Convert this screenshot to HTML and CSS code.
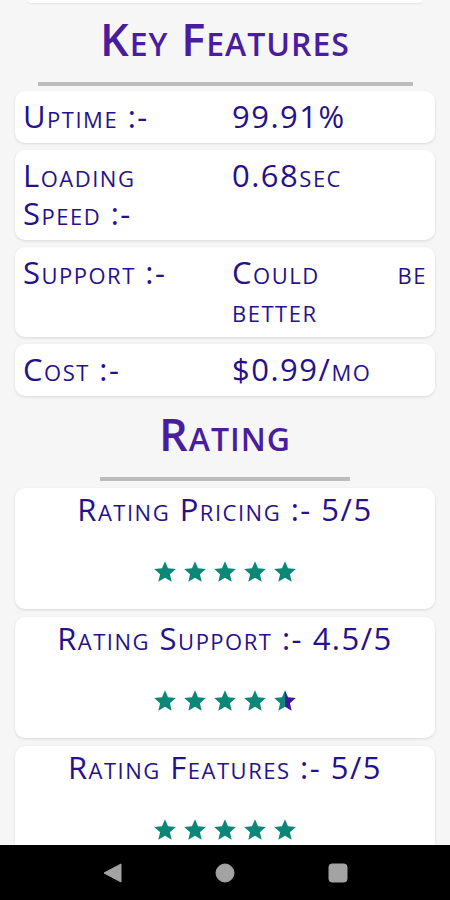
FILE: index.html
```html
<!DOCTYPE html>
<html lang="en">
<head>
    <meta charset="UTF-8">
    <title>Key Features</title>
    <link rel="stylesheet" href="styles.css">
</head>
<body>
    <div class="screen">
        <div class="content">
            <div class="prev-card"></div>

            <h1 class="title">Key Features</h1>
            <div class="divider"></div>

            <div class="list">
                <div class="card row">
                    <div class="label">Uptime :-</div>
                    <div class="value">99.91%</div>
                </div>
                <div class="card row">
                    <div class="label">Loading Speed :-</div>
                    <div class="value">0.68sec</div>
                </div>
                <div class="card row">
                    <div class="label">Support :-</div>
                    <div class="value">Could be better</div>
                </div>
                <div class="card row">
                    <div class="label">Cost :-</div>
                    <div class="value">$0.99/mo</div>
                </div>
            </div>

            <h1 class="title rating-title">Rating</h1>
            <div class="divider short"></div>

            <div class="list ratings">
                <div class="card rating">
                    <div class="rating-text">Rating Pricing :- 5/5</div>
                    <div class="stars">
                        <svg viewBox="0 0 24 24"><path class="full" d="M12 17.27L18.18 21l-1.64-7.03L22 9.24l-7.19-.61L12 2 9.19 8.63 2 9.24l5.46 4.73L5.82 21z"/></svg>
                        <svg viewBox="0 0 24 24"><path class="full" d="M12 17.27L18.18 21l-1.64-7.03L22 9.24l-7.19-.61L12 2 9.19 8.63 2 9.24l5.46 4.73L5.82 21z"/></svg>
                        <svg viewBox="0 0 24 24"><path class="full" d="M12 17.27L18.18 21l-1.64-7.03L22 9.24l-7.19-.61L12 2 9.19 8.63 2 9.24l5.46 4.73L5.82 21z"/></svg>
                        <svg viewBox="0 0 24 24"><path class="full" d="M12 17.27L18.18 21l-1.64-7.03L22 9.24l-7.19-.61L12 2 9.19 8.63 2 9.24l5.46 4.73L5.82 21z"/></svg>
                        <svg viewBox="0 0 24 24"><path class="full" d="M12 17.27L18.18 21l-1.64-7.03L22 9.24l-7.19-.61L12 2 9.19 8.63 2 9.24l5.46 4.73L5.82 21z"/></svg>
                    </div>
                </div>
                <div class="card rating">
                    <div class="rating-text">Rating Support :- 4.5/5</div>
                    <div class="stars">
                        <svg viewBox="0 0 24 24"><path class="full" d="M12 17.27L18.18 21l-1.64-7.03L22 9.24l-7.19-.61L12 2 9.19 8.63 2 9.24l5.46 4.73L5.82 21z"/></svg>
                        <svg viewBox="0 0 24 24"><path class="full" d="M12 17.27L18.18 21l-1.64-7.03L22 9.24l-7.19-.61L12 2 9.19 8.63 2 9.24l5.46 4.73L5.82 21z"/></svg>
                        <svg viewBox="0 0 24 24"><path class="full" d="M12 17.27L18.18 21l-1.64-7.03L22 9.24l-7.19-.61L12 2 9.19 8.63 2 9.24l5.46 4.73L5.82 21z"/></svg>
                        <svg viewBox="0 0 24 24"><path class="full" d="M12 17.27L18.18 21l-1.64-7.03L22 9.24l-7.19-.61L12 2 9.19 8.63 2 9.24l5.46 4.73L5.82 21z"/></svg>
                        <svg viewBox="0 0 24 24">
                            <defs>
                                <linearGradient id="half">
                                    <stop offset="50%" stop-color="#0b8778"/>
                                    <stop offset="50%" stop-color="#3b17a3"/>
                                </linearGradient>
                            </defs>
                            <path fill="url(#half)" d="M12 17.27L18.18 21l-1.64-7.03L22 9.24l-7.19-.61L12 2 9.19 8.63 2 9.24l5.46 4.73L5.82 21z"/>
                        </svg>
                    </div>
                </div>
                <div class="card rating">
                    <div class="rating-text">Rating Features :- 5/5</div>
                    <div class="stars">
                        <svg viewBox="0 0 24 24"><path class="full" d="M12 17.27L18.18 21l-1.64-7.03L22 9.24l-7.19-.61L12 2 9.19 8.63 2 9.24l5.46 4.73L5.82 21z"/></svg>
                        <svg viewBox="0 0 24 24"><path class="full" d="M12 17.27L18.18 21l-1.64-7.03L22 9.24l-7.19-.61L12 2 9.19 8.63 2 9.24l5.46 4.73L5.82 21z"/></svg>
                        <svg viewBox="0 0 24 24"><path class="full" d="M12 17.27L18.18 21l-1.64-7.03L22 9.24l-7.19-.61L12 2 9.19 8.63 2 9.24l5.46 4.73L5.82 21z"/></svg>
                        <svg viewBox="0 0 24 24"><path class="full" d="M12 17.27L18.18 21l-1.64-7.03L22 9.24l-7.19-.61L12 2 9.19 8.63 2 9.24l5.46 4.73L5.82 21z"/></svg>
                        <svg viewBox="0 0 24 24"><path class="full" d="M12 17.27L18.18 21l-1.64-7.03L22 9.24l-7.19-.61L12 2 9.19 8.63 2 9.24l5.46 4.73L5.82 21z"/></svg>
                    </div>
                </div>
            </div>
        </div>

        <div class="navbar">
            <svg class="nav-icon" viewBox="0 0 20 20"><path d="M19 1 L19 19 L2 10 Z" stroke-linejoin="round"/></svg>
            <svg class="nav-icon" viewBox="0 0 20 20"><circle cx="10" cy="10" r="9"/></svg>
            <svg class="nav-icon" viewBox="0 0 20 20"><rect x="1" y="1" width="18" height="18" rx="3"/></svg>
        </div>
    </div>
</body>
</html>
```

FILE: styles.css
```css
body { margin: 0; background: #f6f6f6; font-family: "Open Sans", "Noto Sans", sans-serif; font-variant: small-caps; color: #26118a; }
.screen { width: 450px; height: 900px; display: flex; flex-direction: column; overflow: hidden; }
.content { flex: 1; overflow: hidden; }

.prev-card { height: 3px; margin: 0 28px; background: #fff; border-radius: 0 0 8px 8px; box-shadow: 0 1px 2px rgba(0,0,0,0.08); }

.title { margin: 8px 0 0; font-size: 45px; font-weight: 600; line-height: 56px; text-align: center; color: #4a1c9e; letter-spacing: 1px; }
.divider { height: 4px; margin: 15px 37px 5px 38px; background: #bcbcbc; }
.divider.short { margin: 15px 100px 7px; }

.list { display: flex; flex-direction: column; gap: 7px; margin: 0 15px; }
.list.ratings { gap: 8px; }
.card { background: #fff; border-radius: 10px; box-shadow: 0 1px 3px rgba(0,0,0,0.12); }

.row { display: grid; grid-template-columns: 1fr 1fr; column-gap: 14px; padding: 6px 8px 8px; font-size: 31px; font-weight: 500; line-height: 38px; letter-spacing: 1.5px; }
.value { text-align: justify; }

.rating-title { margin-top: 10px; }

.rating { height: 121px; text-align: center; }
.rating-text { padding-top: 2px; font-size: 31px; font-weight: 500; line-height: 38px; letter-spacing: 1.5px; }
.stars { display: flex; justify-content: center; gap: 4px; margin-top: 31px; }
.stars svg { width: 26px; height: 26px; }
.stars .full { fill: #0b8778; }

.navbar { height: 55px; background: #000; display: flex; align-items: center; justify-content: space-between; padding: 0 102px; }
.nav-icon { width: 20px; height: 20px; fill: #a3a3a3; stroke: #a3a3a3; }
```
